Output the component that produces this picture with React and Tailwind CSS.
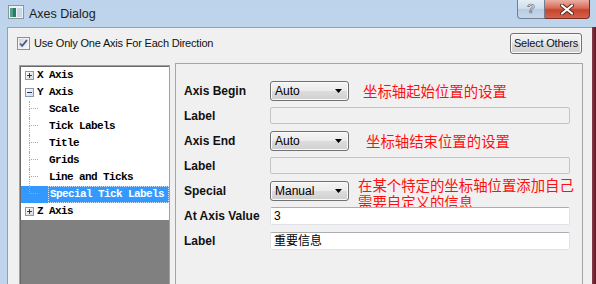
import React from 'react'

const treeRows = [
  { kind: 'parent', label: 'X Axis', open: false },
  { kind: 'parent', label: 'Y Axis', open: true },
  { kind: 'child', label: 'Scale' },
  { kind: 'child', label: 'Tick Labels' },
  { kind: 'child', label: 'Title' },
  { kind: 'child', label: 'Grids' },
  { kind: 'child', label: 'Line and Ticks' },
  { kind: 'child', label: 'Special Tick Labels', selected: true, last: true },
  { kind: 'parent', label: 'Z Axis', open: false },
]

function Expander({ open }) {
  return (
    <span className="w-[9px] h-[9px] border border-[#8a9bb0] bg-gradient-to-br from-white to-[#d6dbe2] flex items-center justify-center shrink-0">
      <svg width="7" height="7" shapeRendering="crispEdges">
        <path d="M1 3.5h5" stroke="#1f3a66" />
        {!open && <path d="M3.5 1v5" stroke="#1f3a66" />}
      </svg>
    </span>
  )
}

function TreeRow({ row }) {
  if (row.kind === 'parent') {
    return (
      <div className="h-[17px] flex items-center pl-[4px]">
        <Expander open={row.open} />
        <span className="ml-[3px]">{row.label}</span>
      </div>
    )
  }
  return (
    <div className={`h-[17px] flex items-stretch pl-[8px] ${row.selected ? 'bg-[#3399ff] text-white' : ''}`}>
      <span className="w-[9px] flex flex-col shrink-0">
        <span className="h-[8px] border-l border-b border-dotted border-[#a8a8a8]" />
        <span className={`flex-1 ${row.last ? '' : 'border-l border-dotted border-[#a8a8a8]'}`} />
      </span>
      <span
        className={`ml-[10px] flex-1 flex items-center pl-[1px] ${row.selected ? 'border border-dotted border-[#cfe6ff]' : ''}`}
      >
        {row.label}
      </span>
    </div>
  )
}

function Combo({ value }) {
  return (
    <div className="w-[79px] h-[20px] rounded-[3px] border border-[#707070] bg-[linear-gradient(to_bottom,#f4f4f4_0%,#ebebeb_50%,#dddddd_50%,#cfcfcf_100%)] shadow-[inset_0_0_0_1px_#fbfbfb] flex items-center justify-between pl-[4px] pr-[6px] text-[12px] text-black shrink-0">
      <span>{value}</span>
      <svg width="7" height="4">
        <path d="M0 0h7L3.5 4z" fill="#000" />
      </svg>
    </div>
  )
}

function DisabledField() {
  return <div className="w-[300px] h-[17px] rounded-[2px] border border-[#c4c4c4] bg-[#f0f0f0]" />
}

function TextField({ value }) {
  return (
    <div className="w-[300px] h-[18px] rounded-[2px] border border-[#e2e3ea] border-t-[#abadb3] bg-white flex items-center pl-[3px] text-[12px] text-black font-['Liberation_Sans','Noto_Sans_CJK_SC',sans-serif]">
      {value}
    </div>
  )
}

function Note({ children, className = '' }) {
  return (
    <div className={`text-[14.4px] leading-[17px] text-[#ff1010] font-['Noto_Sans_CJK_SC',sans-serif] whitespace-nowrap ${className}`}>
      {children}
    </div>
  )
}

function FormRow({ label, children }) {
  return (
    <div className="h-[25px] flex items-center">
      <div className="w-[86px] font-bold text-[12px] text-[#111]">{label}</div>
      {children}
    </div>
  )
}

export default function App() {
  return (
    <div className="w-[596px] h-[284px] overflow-hidden flex flex-col bg-[linear-gradient(to_bottom,#bcd3eb,#cde0f3)] font-['Liberation_Sans',sans-serif]">
      {/* Title bar */}
      <div className="h-[27px] flex items-start shrink-0">
        <svg width="16" height="14" className="ml-[8px] mt-[5px]">
          <rect x="0.5" y="0.5" width="15" height="13" fill="#eef2f6" stroke="#8d949c" />
          <rect x="2" y="3" width="6" height="9" fill="#2f7a66" />
          <rect x="2" y="3" width="3" height="9" fill="#4aa38a" />
          <rect x="9" y="3" width="5" height="9" fill="#c9d8e6" />
        </svg>
        <span className="ml-[5px] mt-[5px] text-[12.5px] text-[#1b1b1b]">Axes Dialog</span>
        <div className="flex-1" />
        <div className="w-[28px] h-[19px] border border-[#6f7f94] border-t-0 rounded-bl-[4px] bg-[linear-gradient(to_bottom,#e6eef7,#cddcec_50%,#b9cbe0_51%,#c8d8ea)] flex items-center justify-center">
          <span className="text-[13px] font-bold text-white [-webkit-text-stroke:0.6px_#4a5566]">?</span>
        </div>
        <div className="w-[45px] h-[19px] border border-[#7a2f29] border-t-0 border-l-0 rounded-br-[4px] bg-[linear-gradient(to_bottom,#eab0a3,#d96a57_45%,#c8432e_55%,#d4634c)] flex items-center justify-center mr-[6px]">
          <svg width="14" height="11">
            <path d="M2 1.5l10 8M12 1.5l-10 8" stroke="#5b2620" strokeWidth="4" strokeLinecap="round" />
            <path d="M2 1.5l10 8M12 1.5l-10 8" stroke="#ffffff" strokeWidth="2.2" strokeLinecap="round" />
          </svg>
        </div>
      </div>

      {/* Body */}
      <div className="flex flex-1 min-h-0">
        <div className="w-[7px] bg-[#c0d5eb] shrink-0" />
        <div className="flex-1 bg-[#f0f0f0] border-l border-t border-[#8ba2bc] flex flex-col min-w-0">
          {/* Top row */}
          <div className="h-[21px] mt-[5px] flex items-center justify-between pl-[9px] pr-[10px] shrink-0">
            <div className="flex items-center">
              <svg width="13" height="13">
                <defs>
                  <linearGradient id="cb" x1="0" y1="0" x2="1" y2="1">
                    <stop offset="0" stopColor="#d4d4d4" />
                    <stop offset="1" stopColor="#fafafa" />
                  </linearGradient>
                </defs>
                <rect x="0.5" y="0.5" width="12" height="12" fill="#f4f4f4" stroke="#8e8f8f" />
                <rect x="2" y="2" width="9" height="9" fill="url(#cb)" />
                <path d="M3 6.5l2.2 2.4L10 3.2" fill="none" stroke="#4a5c91" strokeWidth="1.8" />
              </svg>
              <span className="ml-[4px] text-[11px] tracking-[-0.2px] text-[#111]">
                Use Only One Axis For Each Direction
              </span>
            </div>
            <button className="w-[72px] h-[21px] rounded-[3px] border border-[#707070] bg-[linear-gradient(to_bottom,#f4f4f4_0%,#ebebeb_50%,#dddddd_50%,#cfcfcf_100%)] shadow-[inset_0_0_0_1px_#fbfbfb] text-[11px] tracking-[-0.2px] text-[#111]">
              Select Others
            </button>
          </div>

          {/* Main row */}
          <div className="flex flex-1 min-h-0 mt-[9px] pl-[11px] pr-[9px] gap-[5px]">
            {/* Tree */}
            <div className="w-[151px] mt-[2px] border border-[#a0a0a0] border-b-0 shadow-[inset_1px_1px_0_#696969] flex flex-col pt-[1px] pl-[1px] bg-white shrink-0">
              <div className="font-['Liberation_Mono',monospace] font-bold text-[11px] tracking-[-0.6px] text-black">
                {treeRows.map(row => (
                  <TreeRow key={row.label} row={row} />
                ))}
              </div>
              <div className="flex-1 bg-[#808080]" />
            </div>

            {/* Properties */}
            <div className="flex-1 border border-b-0 border-[#a5a5a5] pt-[14px] pl-[8px]">
              <FormRow label="Axis Begin">
                <Combo value="Auto" />
                <Note className="ml-[14px]">坐标轴起始位置的设置</Note>
              </FormRow>
              <FormRow label="Label">
                <DisabledField />
              </FormRow>
              <FormRow label="Axis End">
                <Combo value="Auto" />
                <Note className="ml-[17px]">坐标轴结束位置的设置</Note>
              </FormRow>
              <FormRow label="Label">
                <DisabledField />
              </FormRow>
              <FormRow label="Special">
                <Combo value="Manual" />
                <Note className="ml-[9px] mt-[4px]">
                  在某个特定的坐标轴位置添加自己
                  <br />
                  需要自定义的信息
                </Note>
              </FormRow>
              <FormRow label="At Axis Value">
                <TextField value="3" />
              </FormRow>
              <FormRow label="Label">
                <TextField value="重要信息" />
              </FormRow>
            </div>
          </div>
        </div>
        <div className="w-[4px] bg-[linear-gradient(to_right,#8a3a48,#5a1722)] shrink-0" />
      </div>
    </div>
  )
}
